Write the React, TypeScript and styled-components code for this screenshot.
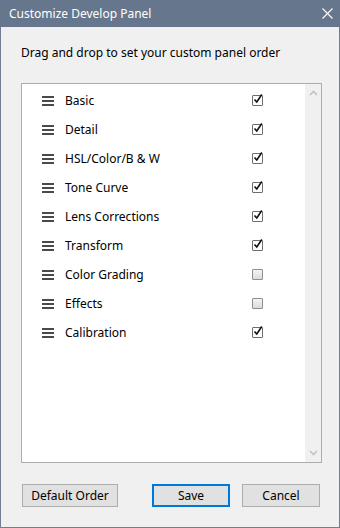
import styled, { createGlobalStyle } from "styled-components";

const Global = createGlobalStyle`
  html, body {
    margin: 0;
    padding: 0;
    background: #f0f0f0;
  }
  body {
    font-family: "Noto Sans", "Open Sans", sans-serif;
    font-size: 12px;
    color: #000;
  }
`;

const panels = [
  { name: "Basic", checked: true },
  { name: "Detail", checked: true },
  { name: "HSL/Color/B & W", checked: true },
  { name: "Tone Curve", checked: true },
  { name: "Lens Corrections", checked: true },
  { name: "Transform", checked: true },
  { name: "Color Grading", checked: false },
  { name: "Effects", checked: false },
  { name: "Calibration", checked: true },
];

const S = {
  window: styled.div`
    width: 338px;
    height: 527px;
    display: flex;
    flex-direction: column;
    border: 1px solid #6f7e93;
    border-top: none;
    background: #f0f0f0;
  `,
  titleBar: styled.div`
    height: 27px;
    flex: none;
    display: flex;
    align-items: center;
    justify-content: space-between;
    background: #66768c;
    color: #fff;
    padding: 0 6px 0 9px;
    margin: 0 -1px;
    font-size: 12px;
  `,
  close: styled.div`
    width: 14px;
    height: 14px;
    display: flex;
    align-items: center;
    justify-content: center;
  `,
  body: styled.div`
    flex: 1;
    display: flex;
    flex-direction: column;
    padding: 18px 17px 0 20px;
  `,
  hint: styled.div`
    height: 16px;
    line-height: 16px;
    margin-bottom: 22px;
  `,
  listBox: styled.div`
    height: 378px;
    display: flex;
    border: 1px solid #abadb3;
    background: #fff;
  `,
  list: styled.div`
    flex: 1;
    padding-top: 2px;
  `,
  row: styled.div`
    height: 29px;
    display: flex;
    align-items: center;
    padding-left: 20px;
  `,
  grip: styled.div`
    width: 12px;
    height: 10px;
    display: flex;
    flex-direction: column;
    justify-content: space-between;
    margin-right: 11px;

    span {
      display: block;
      height: 2px;
      background: #4a4a4a;
    }
  `,
  label: styled.div`
    width: 187px;
  `,
  check: styled.div<{ $on: boolean }>`
    width: 9px;
    height: 9px;
    border: 1px solid ${(p) => (p.$on ? "#6e6e6e" : "#8e8e8e")};
    border-radius: 1px;
    background: ${(p) =>
      p.$on ? "#fff" : "linear-gradient(#f4f4f4, #dcdcdc)"};
    position: relative;

    svg {
      position: absolute;
      left: 0;
      top: -2px;
    }
  `,
  scrollbar: styled.div`
    width: 16px;
    background: #f0f0f0;
    display: flex;
    flex-direction: column;
    justify-content: space-between;
    align-items: center;
    padding: 6px 0;
  `,
  buttons: styled.div`
    display: flex;
    justify-content: space-between;
    margin-top: 21px;
    padding: 0 2px 0 1px;
  `,
  group: styled.div`
    display: flex;
    gap: 12px;
  `,
  button: styled.button<{ $primary?: boolean; $w: number }>`
    width: ${(p) => p.$w}px;
    height: 23px;
    font-family: inherit;
    font-size: 12px;
    color: #000;
    background: #e1e1e1;
    border: ${(p) => (p.$primary ? "2px solid #0078d7" : "1px solid #adadad")};
    padding: 0;
    margin: 0;
  `,
};

const Tick = () => (
  <svg width="10" height="10" viewBox="0 0 10 10">
    <path d="M1.5 5.5 L3.8 8 L8.8 0.5" fill="none" stroke="#111" strokeWidth="1.6" />
  </svg>
);

const Chevron = ({ up }: { up: boolean }) => (
  <svg width="9" height="6" viewBox="0 0 9 6">
    <path
      d={up ? "M1 5 L4.5 1.5 L8 5" : "M1 1 L4.5 4.5 L8 1"}
      fill="none"
      stroke="#c2c2c2"
      strokeWidth="1.6"
    />
  </svg>
);

export default function App() {
  return (
    <>
      <Global />
      <S.window>
        <S.titleBar>
          <span>Customize Develop Panel</span>
          <S.close>
            <svg width="11" height="11" viewBox="0 0 11 11">
              <path d="M0.5 0.5 L10.5 10.5 M10.5 0.5 L0.5 10.5" stroke="#fff" strokeWidth="1.1" />
            </svg>
          </S.close>
        </S.titleBar>
        <S.body>
          <S.hint>Drag and drop to set your custom panel order</S.hint>
          <S.listBox>
            <S.list>
              {panels.map((p) => (
                <S.row key={p.name}>
                  <S.grip>
                    <span />
                    <span />
                    <span />
                  </S.grip>
                  <S.label>{p.name}</S.label>
                  <S.check $on={p.checked}>{p.checked && <Tick />}</S.check>
                </S.row>
              ))}
            </S.list>
            <S.scrollbar>
              <Chevron up />
              <Chevron up={false} />
            </S.scrollbar>
          </S.listBox>
          <S.buttons>
            <S.button $w={96}>Default Order</S.button>
            <S.group>
              <S.button $w={78} $primary>
                Save
              </S.button>
              <S.button $w={78}>Cancel</S.button>
            </S.group>
          </S.buttons>
        </S.body>
      </S.window>
    </>
  );
}
